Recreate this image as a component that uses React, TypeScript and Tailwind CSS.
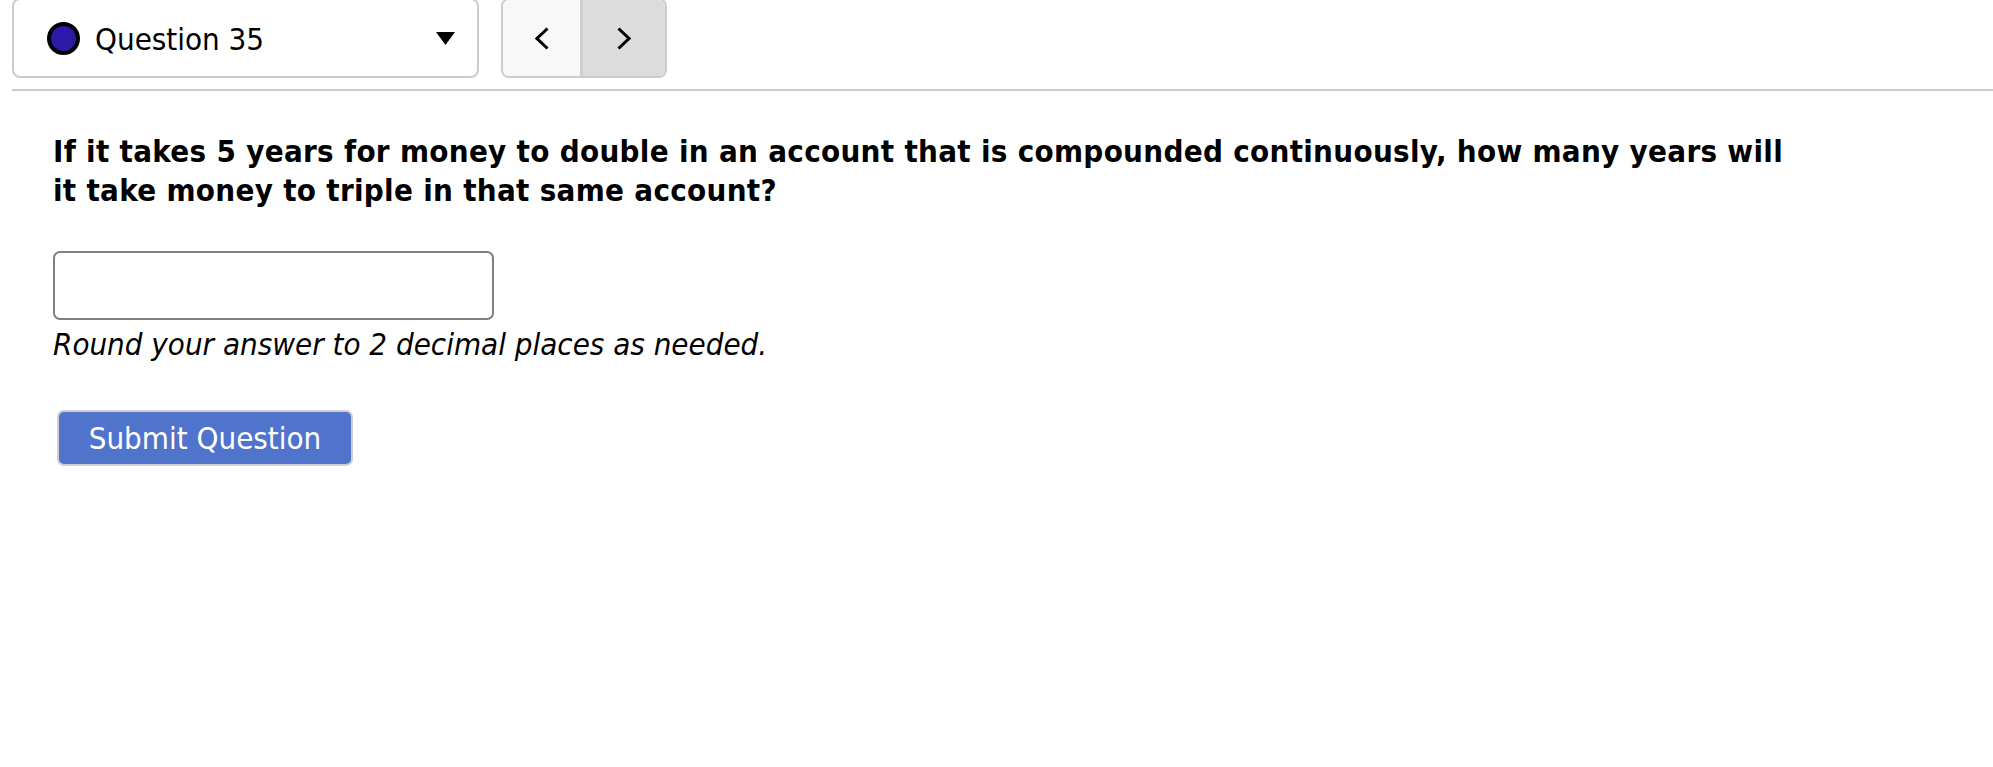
import React from 'react';

export default function App() {
  return (
    <div className="w-[1993px] h-[767px] bg-white overflow-hidden text-black font-['DejaVu_Sans_Condensed','DejaVu_Sans',sans-serif] [font-stretch:condensed]">
      {/* question picker + prev/next */}
      <div className="flex items-start pl-[12px] gap-[22px] h-[78px]">
        <div className="-mt-[2px] h-[80px] w-[467px] border-2 border-[#cccccc] rounded-[8px] bg-white flex items-center pl-[33px] pr-[22px]">
          <span className="w-[33px] h-[33px] rounded-full border-[4px] border-black bg-[#2c19a6] shrink-0" />
          <span className="ml-[15px] text-[31px] leading-none pt-[2px]">Question 35</span>
          <svg className="ml-auto" width="19" height="13" viewBox="0 0 19 13">
            <polygon points="0,0 19,0 9.5,13" fill="black" />
          </svg>
        </div>
        <div className="-mt-[2px] h-[80px] w-[166px] border-2 border-[#cccccc] rounded-[8px] overflow-hidden flex">
          <button className="w-[80px] h-full bg-[#f8f8f8] border-r-[3px] border-[#cfcfcf] flex items-center justify-center pt-[1px]">
            <svg width="14" height="23" viewBox="0 0 14 23">
              <polyline points="12.5,1.5 2,11.5 12.5,21.5" fill="none" stroke="black" strokeWidth="3" />
            </svg>
          </button>
          <button className="flex-1 h-full bg-[#dcdcdc] flex items-center justify-center pt-[1px]">
            <svg width="14" height="23" viewBox="0 0 14 23">
              <polyline points="1.5,1.5 12,11.5 1.5,21.5" fill="none" stroke="black" strokeWidth="3" />
            </svg>
          </button>
        </div>
      </div>
      <div className="mt-[11px] ml-[12px] h-[2px] bg-[#cccccc]" />

      <div className="pl-[53px]">
        <p className="mt-[41px] text-[31px] leading-[39px] font-bold tracking-[0.3px]">
          If it takes 5 years for money to double in an account that is compounded continuously, how many years will
          <br />
          it take money to triple in that same account?
        </p>

        <input
          type="text"
          className="mt-[41px] block w-[441px] h-[69px] border-2 border-[#808080] rounded-[7px] bg-white outline-none"
        />
        <p className="mt-[6px] text-[31px] leading-[36px] italic">Round your answer to 2 decimal places as needed.</p>

        <button className="mt-[48px] ml-[4px] w-[296px] h-[56px] bg-[#5074cc] border-2 border-[#cfcfcf] rounded-[7px] text-white text-[31px] leading-none flex items-center justify-center">
          Submit Question
        </button>
      </div>
    </div>
  );
}
